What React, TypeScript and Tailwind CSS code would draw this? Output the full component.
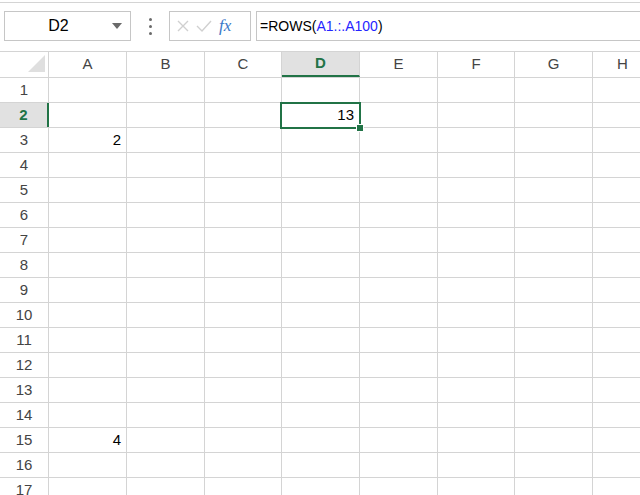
const cols = [
  { name: 'A', w: 78 },
  { name: 'B', w: 78 },
  { name: 'C', w: 77 },
  { name: 'D', w: 78 },
  { name: 'E', w: 78 },
  { name: 'F', w: 77 },
  { name: 'G', w: 78 },
  { name: 'H', w: 60 },
]

const values: Record<string, string> = {
  A3: '2',
  D2: '13',
  A15: '4',
}

const rows = Array.from({ length: 17 }, (_, i) => i + 1)

function FormulaBar() {
  return (
    <div className="border-t border-b border-[#d4d4d4] h-[50px] flex items-start pt-[8px] bg-white">
      {/* Name box */}
      <div className="ml-[4px] w-[127px] h-[30px] border border-[#c6c6c6] flex items-center relative">
        <span className="flex-1 text-center pr-[18px] text-[16px] text-black">D2</span>
        <svg className="absolute right-[8px] top-[11px]" width="10" height="7" viewBox="0 0 10 7">
          <path d="M0 0 L10 0 L5 6 Z" fill="#6a6a6a" />
        </svg>
      </div>
      {/* dots */}
      <div className="w-[38px] h-[30px] flex flex-col items-center justify-center gap-[4px]">
        <div className="w-[3px] h-[3px] rounded-full bg-[#6a6a6a]" />
        <div className="w-[3px] h-[3px] rounded-full bg-[#6a6a6a]" />
        <div className="w-[3px] h-[3px] rounded-full bg-[#6a6a6a]" />
      </div>
      {/* cancel / enter / fx */}
      <div className="w-[82px] h-[30px] border border-[#c6c6c6] flex items-center pl-[6px] gap-[6px]">
        <svg width="14" height="14" viewBox="0 0 14 14">
          <path d="M2 2 L12 12 M12 2 L2 12" stroke="#d0d0d0" strokeWidth="1.4" fill="none" />
        </svg>
        <svg width="16" height="14" viewBox="0 0 16 14">
          <path d="M1 7 L6 12 L15 2" stroke="#d0d0d0" strokeWidth="1.4" fill="none" />
        </svg>
        <span
          className="ml-[1px] text-[17px] italic text-[#3a78c8]"
          style={{ fontFamily: '"Liberation Serif", serif' }}
        >
          fx
        </span>
      </div>
      {/* formula */}
      <div className="ml-[5px] flex-1 h-[30px] border-t border-b border-l border-[#c6c6c6] flex items-center pl-[3px] text-[14px]">
        <span className="text-black">=ROWS(</span>
        <span className="text-[#2525ff]">A1.:.A100</span>
        <span className="text-black">)</span>
      </div>
    </div>
  )
}

function Header() {
  return (
    <div className="flex h-[26px] border-b border-[#d4d4d4] bg-white">
      <div className="w-[49px] shrink-0 border-r border-[#d4d4d4] relative">
        <svg className="absolute left-[28px] top-[3px]" width="18" height="18" viewBox="0 0 18 18">
          <path d="M17 0 L17 17 L0 17 Z" fill="#dfdfdf" />
        </svg>
      </div>
      {cols.map(c => {
        const sel = c.name === 'D'
        return (
          <div
            key={c.name}
            style={{ width: c.w }}
            className={`shrink-0 flex items-center justify-center text-[15px] border-r ${
              sel
                ? 'bg-[#e1e1e1] text-[#217346] font-bold border-[#d4d4d4] border-b-2 border-b-[#217346]'
                : 'text-[#444] border-[#d4d4d4]'
            }`}
          >
            {c.name}
          </div>
        )
      })}
    </div>
  )
}

export default function App() {
  return (
    <div
      className="w-[640px] h-[495px] overflow-hidden bg-white"
      style={{ fontFamily: '"Liberation Sans", Arial, sans-serif' }}
    >
      <div className="h-[2px]" />
      <FormulaBar />
      <Header />
      {rows.map(r => {
        const selRow = r === 2
        return (
          <div key={r} className="flex h-[25px] border-b border-[#d4d4d4]">
            <div
              className={`w-[49px] shrink-0 flex items-center justify-center text-[15px] ${
                selRow
                  ? 'bg-[#e1e1e1] text-[#217346] font-bold border-r-2 border-[#217346]'
                  : 'text-[#444] border-r border-[#d4d4d4]'
              }`}
            >
              {r}
            </div>
            {cols.map(c => {
              const id = c.name + r
              const active = id === 'D2'
              return (
                <div
                  key={id}
                  style={{ width: c.w }}
                  className="shrink-0 border-r border-[#d4d4d4] relative flex items-center justify-end pr-[5px] text-[15px] text-black"
                >
                  {values[id]}
                  {active && (
                    <>
                      <div className="absolute z-10 -left-[2px] -top-[1px] -right-[2px] -bottom-[2px] border-2 border-[#217346]" />
                      <div className="absolute z-20 -right-[5px] -bottom-[5px] w-[8px] h-[8px] bg-[#217346] border border-white" />
                    </>
                  )}
                </div>
              )
            })}
          </div>
        )
      })}
    </div>
  )
}
